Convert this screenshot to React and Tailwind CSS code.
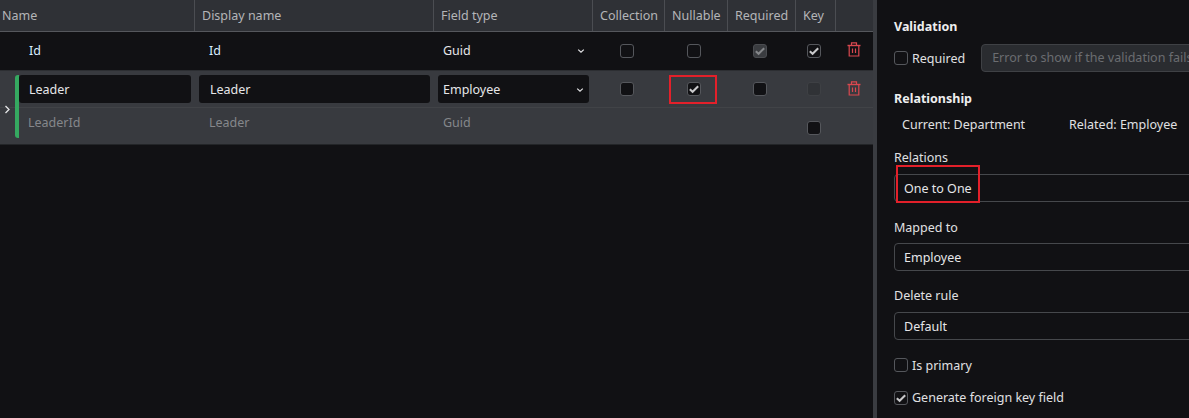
import React from "react";

const Check = ({ color = "#c9c9cb" }) => (
  <svg viewBox="0 0 12 12" className="w-[12px] h-[12px]" fill="none">
    <path d="M1.8 6.2 L4.6 8.8 L10.2 3.2" stroke={color} strokeWidth="2" />
  </svg>
);

const Box = ({ checked, variant = "clear", className = "" }) => {
  const styles = {
    clear: "bg-transparent border-[#55575c]",
    dark: "bg-[#111114] border-[#55575c]",
    disabled: "bg-[#3a3c40] border-[#4a4c50]",
    faint: "bg-[#303236] border-[#3e4044]",
  };
  return (
    <span className={`inline-flex shrink-0 w-[12px] h-[12px] box-content items-center justify-center rounded-[3px] border ${styles[variant]} ${className}`}>
      {checked && <Check color={variant === "disabled" ? "#85878a" : "#c9c9cb"} />}
    </span>
  );
};

const Trash = () => (
  <svg width="14" height="15" viewBox="0 0 14 15" fill="none" stroke="#d9484f" strokeWidth="1.2">
    <path d="M0.5 3.5H13.5" strokeWidth="1.4" />
    <path d="M4.5 3V0.8H9.5V3" />
    <path d="M2.2 3.5V14H11.8V3.5" />
    <path d="M5.5 6.5V11M8.5 6.5V11" />
  </svg>
);

const Chevron = () => (
  <svg width="8" height="6" viewBox="0 0 8 6" fill="none" stroke="#e4e4e6" strokeWidth="1.2">
    <path d="M1.2 1.6 L4 4.2 L6.8 1.6" />
  </svg>
);

const cols = "grid grid-cols-[195px_239px_159px_72px_63px_68px_40px_37px]";

const HeaderCell = ({ children }) => (
  <div className="h-full flex items-center pl-[7px] border-r border-[#4b4d52] text-[#b4b5b8] whitespace-nowrap overflow-hidden">
    {children}
  </div>
);

const Center = ({ children, className = "" }) => (
  <div className={`flex items-center justify-center ${className}`}>{children}</div>
);

const FieldInput = ({ children, className = "" }) => (
  <div className={`h-[28px] rounded-[3px] bg-[#111114] text-[#e6e6e8] flex items-center pt-[1px] ${className}`}>{children}</div>
);

const Select = ({ children, className = "" }) => (
  <div className={`h-[28px] rounded-[4px] border border-[#46484c] pl-[9px] pt-[1px] flex items-center text-[#e6e6e8] ${className}`}>
    {children}
  </div>
);

export default function App() {
  return (
    <div
      className="w-[1189px] h-[418px] overflow-hidden flex bg-[#111114] text-[12.5px] leading-[18px]"
      style={{ fontFamily: '"Noto Sans", "Open Sans", sans-serif' }}
    >
      <div className="w-[873px] shrink-0 flex flex-col">
        <div className={`${cols} h-[32px] bg-[#2f3136] border-b border-[#55575c]`}>
          <HeaderCell><span className="-ml-[5px]">Name</span></HeaderCell>
          <HeaderCell>Display name</HeaderCell>
          <HeaderCell>Field type</HeaderCell>
          <HeaderCell>Collection</HeaderCell>
          <HeaderCell>Nullable</HeaderCell>
          <HeaderCell>Required</HeaderCell>
          <HeaderCell>Key</HeaderCell>
          <div />
        </div>

        <div className={`${cols} h-[38px] items-center text-[#e6e6e8]`}>
          <div className="pl-[29px]"><span className="text-[#d8ecff]">Id</span></div>
          <div className="pl-[14px]"><span className="text-[#d8ecff]">Id</span></div>
          <div className="pl-[9px] pr-[8px] flex items-center justify-between">
            <span>Guid</span>
            <Chevron />
          </div>
          <Center className="pr-[4px]"><Box /></Center>
          <Center className="pr-[5px]"><Box /></Center>
          <Center className="pr-[4px]"><Box checked variant="disabled" /></Center>
          <Center className="pr-[4px]"><Box checked /></Center>
          <Center className="-mt-[3px] pr-[1px]"><Trash /></Center>
        </div>

        <div className="relative h-[75px] bg-[#383a3f] border-y border-[#2c2e32] border-b-[#232528]">
          <svg className="absolute left-[4px] top-[34px]" width="7" height="9" viewBox="0 0 7 9" fill="none" stroke="#e6e6e8" strokeWidth="1.3">
            <path d="M1.5 1 L5 4.5 L1.5 8" />
          </svg>
          <div className="absolute left-[15px] top-[4px] w-[4px] h-[63px] rounded-l-[3px] bg-[#35a860]" />
          <div className={`${cols} h-[37px] items-center border-b border-[#414347]`}>
            <div className="pl-[19px] pr-[4px]"><FieldInput className="pl-[10px]">Leader</FieldInput></div>
            <div className="pl-[4px] pr-[4px]"><FieldInput className="pl-[11px]">Leader</FieldInput></div>
            <div className="pl-[4px] pr-[4px]">
              <FieldInput className="pl-[5px] pr-[5px] justify-between"><span>Employee</span><Chevron /></FieldInput>
            </div>
            <Center className="pr-[4px]"><Box variant="dark" /></Center>
            <Center className="relative pr-[5px]">
              <Box checked variant="dark" />
              <div className="absolute left-[4px] -top-[7px] w-[48px] h-[29px] border-2 border-[#e3202a]" />
            </Center>
            <Center className="pr-[4px]"><Box variant="dark" /></Center>
            <Center className="pr-[4px]"><Box variant="faint" /></Center>
            <Center className="-mt-[2px] pr-[1px]"><Trash /></Center>
          </div>
          <div className={`${cols} h-[36px] items-center text-[#85878b]`}>
            <div className="pl-[28px] -mt-[6px]">LeaderId</div>
            <div className="pl-[14px] -mt-[6px]">Leader</div>
            <div className="pl-[9px] -mt-[6px]">Guid</div>
            <div />
            <div />
            <div />
            <Center className="pr-[4px] mt-[4px]"><Box variant="dark" /></Center>
            <div />
          </div>
        </div>
      </div>

      <div className="w-[4px] shrink-0 bg-[#3a3c41]" />

      <div className="flex-1 min-w-0 pl-[17px] text-[#e0e0e2] overflow-hidden">
        <div className="mt-[18px] font-bold text-[#eeeeef]">Validation</div>
        <div className="mt-[8px] flex items-center">
          <Box className="mr-[4px]" />
          <span className="translate-y-[1px]">Required</span>
          <div className="ml-[16px] w-[300px] shrink-0 h-[28px] rounded-[4px] border border-[#3f4145] bg-[#2a2c30] pl-[10px] flex items-center text-[#6b6d71] whitespace-nowrap">
            Error to show if the validation fails
          </div>
        </div>
        <div className="mt-[18px] font-bold text-[#eeeeef]">Relationship</div>
        <div className="mt-[8px] pl-[8px] flex whitespace-nowrap">
          <span className="w-[167px]">Current: Department</span>
          <span>Related: Employee</span>
        </div>
        <div className="relative mt-[15px]">
          <div>Relations</div>
          <Select className="mt-[7px] w-[300px]">One to One</Select>
          <div className="absolute left-[2px] top-[16px] w-[84px] h-[38px] border-2 border-[#e3202a]" />
        </div>
        <div className="mt-[17px]">Mapped to</div>
        <Select className="mt-[6px] w-[300px]">Employee</Select>
        <div className="mt-[16px]">Delete rule</div>
        <Select className="mt-[7px] w-[300px]">Default</Select>
        <div className="mt-[16px] flex items-center"><Box className="mr-[4px]" /><span className="translate-y-[1px]">Is primary</span></div>
        <div className="mt-[15px] flex items-center"><Box checked className="mr-[4px]" /><span>Generate foreign key field</span></div>
      </div>
    </div>
  );
}
